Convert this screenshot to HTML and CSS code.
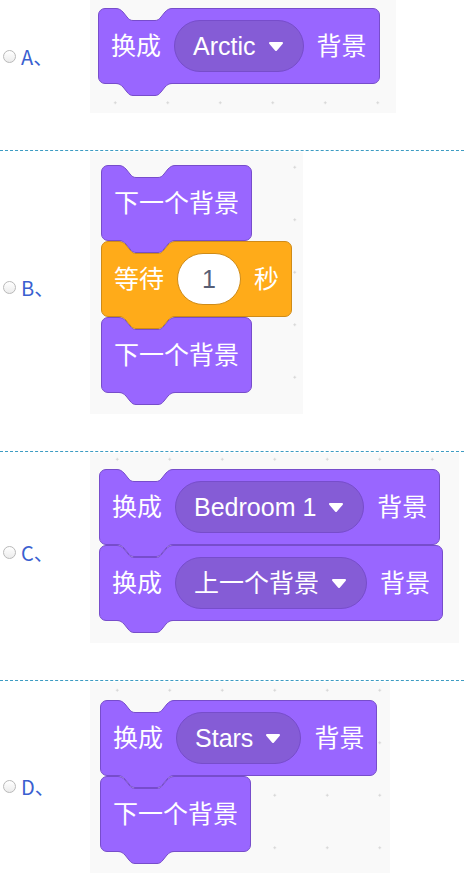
FILE: index.html
```html
<!DOCTYPE html>
<html lang="zh-CN">
<head>
    <meta charset="UTF-8">
    <meta name="viewport" content="width=device-width, initial-scale=1.0">
    <title>选择题</title>
    <link rel="stylesheet" href="styles.css">
</head>
<body>
    <!-- shared shapes for the block notch and the tab under each block -->
    <svg class="defs" width="0" height="0">
        <defs>
            <path id="cut-fill" d="M0,0 V0.5 C3,0.5 5,2 7,4 L11,9 C13,11.5 14.5,12.5 17,12.5 H39 C41.5,12.5 43,11.5 45,9 L49,4 C51,2 53,0.5 56,0.5 V0 Z"/>
            <path id="cut-edge" d="M0,0.5 C3,0.5 5,2 7,4 L11,9 C13,11.5 14.5,12.5 17,12.5 H39 C41.5,12.5 43,11.5 45,9 L49,4 C51,2 53,0.5 56,0.5"/>
            <path id="arrow" d="M2,2 H14 L8,9 Z"/>
        </defs>
    </svg>

    <div class="question">

        <div class="option option-a">
            <label class="choice"><span class="radio"></span><span class="letter">A、</span></label>
            <div class="canvas canvas-a">
                <div class="stack">
                    <div class="block looks">
                        <svg class="notch" width="56" height="14"><use href="#cut-fill" class="fill"/><use href="#cut-edge" class="edge"/></svg>
                        <span>换成</span>
                        <span class="menu">Arctic<svg class="caret" width="16" height="11"><use href="#arrow"/></svg></span>
                        <span>背景</span>
                        <svg class="tab" width="56" height="14"><use href="#cut-fill" class="fill"/><use href="#cut-edge" class="edge"/></svg>
                    </div>
                </div>
            </div>
        </div>

        <div class="option option-b">
            <label class="choice"><span class="radio"></span><span class="letter">B、</span></label>
            <div class="canvas canvas-b">
                <div class="stack">
                    <div class="block looks">
                        <svg class="notch" width="56" height="14"><use href="#cut-fill" class="fill"/><use href="#cut-edge" class="edge"/></svg>
                        <span>下一个背景</span>
                        <svg class="tab" width="56" height="14"><use href="#cut-fill" class="fill"/><use href="#cut-edge" class="edge"/></svg>
                    </div>
                    <div class="block control">
                        <svg class="notch" width="56" height="14"><use href="#cut-fill" class="fill"/><use href="#cut-edge" class="edge"/></svg>
                        <span>等待</span>
                        <span class="number">1</span>
                        <span>秒</span>
                        <svg class="tab" width="56" height="14"><use href="#cut-fill" class="fill"/><use href="#cut-edge" class="edge"/></svg>
                    </div>
                    <div class="block looks">
                        <svg class="notch" width="56" height="14"><use href="#cut-fill" class="fill"/><use href="#cut-edge" class="edge"/></svg>
                        <span>下一个背景</span>
                        <svg class="tab" width="56" height="14"><use href="#cut-fill" class="fill"/><use href="#cut-edge" class="edge"/></svg>
                    </div>
                </div>
            </div>
        </div>

        <div class="option option-c">
            <label class="choice"><span class="radio"></span><span class="letter">C、</span></label>
            <div class="canvas canvas-c">
                <div class="stack">
                    <div class="block looks">
                        <svg class="notch" width="56" height="14"><use href="#cut-fill" class="fill"/><use href="#cut-edge" class="edge"/></svg>
                        <span>换成</span>
                        <span class="menu">Bedroom 1<svg class="caret" width="16" height="11"><use href="#arrow"/></svg></span>
                        <span>背景</span>
                        <svg class="tab" width="56" height="14"><use href="#cut-fill" class="fill"/><use href="#cut-edge" class="edge"/></svg>
                    </div>
                    <div class="block looks">
                        <svg class="notch" width="56" height="14"><use href="#cut-fill" class="fill"/><use href="#cut-edge" class="edge"/></svg>
                        <span>换成</span>
                        <span class="menu">上一个背景<svg class="caret" width="16" height="11"><use href="#arrow"/></svg></span>
                        <span>背景</span>
                        <svg class="tab" width="56" height="14"><use href="#cut-fill" class="fill"/><use href="#cut-edge" class="edge"/></svg>
                    </div>
                </div>
            </div>
        </div>

        <div class="option option-d">
            <label class="choice"><span class="radio"></span><span class="letter">D、</span></label>
            <div class="canvas canvas-d">
                <div class="stack">
                    <div class="block looks">
                        <svg class="notch" width="56" height="14"><use href="#cut-fill" class="fill"/><use href="#cut-edge" class="edge"/></svg>
                        <span>换成</span>
                        <span class="menu">Stars<svg class="caret" width="16" height="11"><use href="#arrow"/></svg></span>
                        <span>背景</span>
                        <svg class="tab" width="56" height="14"><use href="#cut-fill" class="fill"/><use href="#cut-edge" class="edge"/></svg>
                    </div>
                    <div class="block looks">
                        <svg class="notch" width="56" height="14"><use href="#cut-fill" class="fill"/><use href="#cut-edge" class="edge"/></svg>
                        <span>下一个背景</span>
                        <svg class="tab" width="56" height="14"><use href="#cut-fill" class="fill"/><use href="#cut-edge" class="edge"/></svg>
                    </div>
                </div>
            </div>
        </div>

    </div>
</body>
</html>
```

FILE: styles.css
```css
body {
    margin: 0;
    background: #ffffff;
    font-family: "Noto Sans CJK SC", sans-serif;
    overflow: hidden;
}

.defs {
    position: absolute;
    width: 0;
    height: 0;
}

.option {
    display: flex;
    align-items: center;
    padding: 1px 0 37px;
    border-bottom: 1px dashed #3d9cc3;
}

.option-a {
    padding-top: 0;
}

.option-d {
    border-bottom: none;
    padding-bottom: 0;
}

.choice {
    width: 90px;
    display: flex;
    align-items: center;
    gap: 5px;
    padding-left: 3px;
    box-sizing: border-box;
}

.option + .option .choice {
    margin-top: 9px;
}

.radio {
    width: 13px;
    height: 13px;
    box-sizing: border-box;
    border-radius: 50%;
    border: 1px solid #b9b9b9;
    background: linear-gradient(#ffffff, #ececec);
}

.letter {
    font-size: 20px;
    line-height: 1;
    color: #3a5fd0;
}

/* scratch workspace */
.canvas {
    box-sizing: border-box;
    background-color: #f9f9f9;
    background-image: radial-gradient(circle, #d4d4d4 0.9px, transparent 1.4px);
    background-size: 52.5px 52.5px;
}

.canvas-a {
    width: 306px;
    height: 113px;
    padding: 8px 0 0 8px;
    background-position: -1px 24px;
}

.canvas-b {
    width: 213px;
    height: 262px;
    padding: 13px 0 0 11px;
    background-position: 21px -11px;
}

.canvas-c {
    width: 369px;
    height: 190px;
    padding: 16px 0 0 9px;
    background-position: 1px -20px;
}

.canvas-d {
    width: 300px;
    height: 200px;
    padding: 18px 0 0 10px;
    background-position: 1px -18px;
}

.stack {
    display: flex;
    flex-direction: column;
    align-items: flex-start;
}

.block {
    position: relative;
    box-sizing: border-box;
    height: 76px;
    display: flex;
    align-items: center;
    gap: 13px;
    padding: 0 12px;
    border: 1px solid;
    border-radius: 7px;
    font-family: "Liberation Sans", "Noto Sans CJK SC", sans-serif;
    font-size: 25px;
    line-height: 1;
    color: #ffffff;
    white-space: nowrap;
}

.looks {
    background: #9966ff;
    border-color: #774dcb;
}

.control {
    background: #ffab19;
    border-color: #cf8b17;
}

.notch,
.tab {
    position: absolute;
    left: 17px;
}

.notch {
    top: -1px;
}

.tab {
    top: 100%;
    z-index: 2;
}

.notch .fill {
    fill: #f9f9f9;
}

.looks .tab .fill {
    fill: #9966ff;
}

.control .tab .fill {
    fill: #ffab19;
}

.edge {
    fill: none;
    stroke-width: 1;
}

.looks .edge {
    stroke: #774dcb;
}

.control .edge {
    stroke: #cf8b17;
}

.menu {
    box-sizing: border-box;
    height: 52px;
    display: flex;
    align-items: center;
    gap: 12px;
    padding: 0 19px 0 18px;
    border: 1px solid #774dcb;
    border-radius: 26px;
    background: #855cd6;
}

.caret {
    fill: #ffffff;
    stroke: #ffffff;
    stroke-width: 2;
    stroke-linejoin: round;
}

.number {
    box-sizing: border-box;
    min-width: 64px;
    height: 52px;
    display: flex;
    align-items: center;
    justify-content: center;
    border: 1px solid #cf8b17;
    border-radius: 26px;
    background: #ffffff;
    color: #575e75;
}
```
